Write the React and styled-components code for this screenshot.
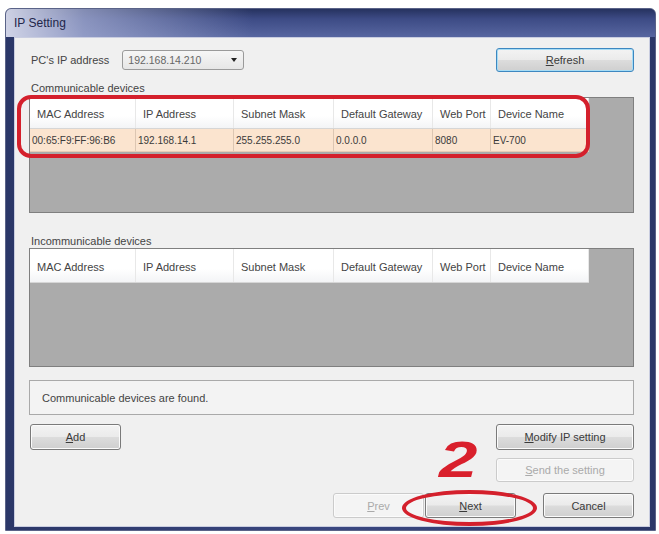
import React from "react";
import styled, { createGlobalStyle } from "styled-components";

const GlobalStyle = createGlobalStyle`
  body {
    margin: 0;
    background: #ffffff;
    font-family: "Liberation Sans", Arial, sans-serif;
  }
`;

const columns = [
  { label: "MAC Address", width: 106 },
  { label: "IP Address", width: 98 },
  { label: "Subnet Mask", width: 100 },
  { label: "Default Gateway", width: 99 },
  { label: "Web Port", width: 58 },
  { label: "Device Name", width: 98 },
];

const foundDevices = [
  ["00:65:F9:FF:96:B6", "192.168.14.1", "255.255.255.0", "0.0.0.0", "8080", "EV-700"],
];

const Window = styled.div`
  position: relative;
  box-sizing: border-box;
  width: 651px;
  height: 523px;
  margin: 8px 0 0 5px;
  padding: 0 5px 3px 8px;
  display: flex;
  flex-direction: column;
  border: 1px solid #5a6388;
  border-radius: 6px 6px 0 0;
  background: linear-gradient(to right, #2b3768 0%, #3a4780 50%, #2b3768 100%);
`;

const TitleBar = styled.div`
  height: 28px;
  margin: 0 -5px 0 -8px;
  padding-left: 8px;
  display: flex;
  align-items: center;
  border-radius: 5px 5px 0 0;
  background:
    linear-gradient(to right, rgba(214, 217, 234, 0.95) 0%, rgba(170, 178, 214, 0.7) 12%, rgba(110, 122, 175, 0) 38%),
    linear-gradient(#26325f 0%, #3d4b85 35%, #5766a0 100%);
`;

const Title = styled.span`
  font-size: 12px;
  color: #22264a;
`;

const Client = styled.div`
  flex: 1;
  box-sizing: border-box;
  padding: 0 15px 0 14px;
  display: flex;
  flex-direction: column;
  background: #f0f0f0;
  border: 1px solid #c9cde0;
  color: #444;
  font-size: 11px;
`;

const TopRow = styled.div`
  margin-top: 10px;
  height: 24px;
  display: flex;
  align-items: center;
`;

const Label = styled.span`
  margin-left: 2px;
  color: #444;
`;

const SectionLabel = styled.div`
  margin: ${(p) => p.$top}px 0 0 2px;
  height: 14px;
  line-height: 14px;
  color: #444;
`;

const Combo = styled.div`
  box-sizing: border-box;
  width: 122px;
  height: 20px;
  margin-left: 13px;
  padding: 0 6px 0 5px;
  display: flex;
  align-items: center;
  justify-content: space-between;
  border: 1px solid #9a9a9a;
  border-radius: 3px;
  background: linear-gradient(#f6f6f6, #e6e6e6);
  color: #666;
  font-size: 10.5px;
`;

const Arrow = styled.span`
  width: 0;
  height: 0;
  border-left: 3px solid transparent;
  border-right: 3px solid transparent;
  border-top: 4px solid #222;
`;

const Button = styled.button`
  box-sizing: border-box;
  width: ${(p) => p.$w || 91}px;
  height: ${(p) => p.$h || 25}px;
  padding: 0;
  font-family: inherit;
  font-size: 11px;
  color: ${(p) => (p.$disabled ? "#aaaaaa" : "#3a3a3a")};
  border: 1px solid ${(p) => (p.$disabled ? "#cbcbcb" : p.$default ? "#3d87c0" : "#7a7a7a")};
  border-radius: 3px;
  background: ${(p) =>
    p.$disabled
      ? "#f4f4f4"
      : "linear-gradient(#f3f3f3 0%, #ebebeb 48%, #dcdcdc 52%, #cfcfcf 100%)"};
  box-shadow: ${(p) => (p.$default ? "inset 0 0 0 1px #a6dcf5" : "inset 0 0 0 1px #fbfbfb")};
  margin-left: auto;

  u {
    text-decoration-thickness: 1px;
    text-underline-offset: 1px;
  }
`;

const TableFrame = styled.div`
  box-sizing: border-box;
  height: ${(p) => p.$h}px;
  margin-top: ${(p) => p.$top || 0}px;
  border: 1px solid #7f7f7f;
  background: #ababab;
  display: flex;
  flex-direction: column;
`;

const HeaderRow = styled.div`
  display: flex;
  width: 559px;
  height: ${(p) => p.$h}px;
  background: linear-gradient(#ffffff 0%, #ffffff 60%, #f3f4f6 100%);
  border-bottom: 1px solid #d6d6d6;
`;

const HeaderCell = styled.div`
  box-sizing: border-box;
  padding: 2px 0 0 7px;
  display: flex;
  align-items: center;
  border-right: 1px solid #e8e8e8;
  color: #444;
`;

const DataRow = styled.div`
  display: flex;
  width: 559px;
  height: 22px;
  background: #fbe4cf;
  border-bottom: 1px solid #e8cdb5;
`;

const DataCell = styled.div`
  box-sizing: border-box;
  padding-left: 2px;
  display: flex;
  align-items: center;
  border-right: 1px solid #dcc6b2;
  font-size: 10px;
  color: #3a3a3a;
`;

const StatusBox = styled.div`
  box-sizing: border-box;
  height: 35px;
  margin-top: 13px;
  padding-left: 12px;
  display: flex;
  align-items: center;
  border: 1px solid #a9a9a9;
  background: #f3f3f3;
  color: #444;
`;

const ActionArea = styled.div`
  margin-top: 9px;
  display: flex;
  justify-content: space-between;
  align-items: flex-start;
`;

const RightColumn = styled.div`
  display: flex;
  flex-direction: column;
  gap: 8px;
`;

const BottomRow = styled.div`
  margin-top: 11px;
  display: flex;
  justify-content: flex-end;
  gap: 1px;
`;

const Spacer = styled.div`
  width: 25px;
`;

const RoundMark = styled.div`
  position: absolute;
  box-sizing: border-box;
  left: ${(p) => p.$x}px;
  top: ${(p) => p.$y}px;
  width: ${(p) => p.$w}px;
  height: ${(p) => p.$h}px;
  border: 4px solid #d4202c;
  border-radius: ${(p) => p.$r};
  pointer-events: none;
`;

const StepNumber = styled.span`
  position: absolute;
  left: 433px;
  top: 426px;
  font-size: 50px;
  line-height: 50px;
  font-weight: bold;
  font-style: italic;
  color: #d9202c;
  transform: scaleX(1.38);
  transform-origin: left top;
`;

function DeviceTable({ height, headerHeight, rows, top }) {
  return (
    <TableFrame $h={height} $top={top}>
      <HeaderRow $h={headerHeight}>
        {columns.map((c) => (
          <HeaderCell key={c.label} style={{ width: c.width }}>
            {c.label}
          </HeaderCell>
        ))}
      </HeaderRow>
      {rows.map((r) => (
        <DataRow key={r[0]}>
          {r.map((v, i) => (
            <DataCell key={i} style={{ width: columns[i].width }}>
              {v}
            </DataCell>
          ))}
        </DataRow>
      ))}
    </TableFrame>
  );
}

export default function App() {
  return (
    <>
      <GlobalStyle />
      <Window>
        <TitleBar>
          <Title>IP Setting</Title>
        </TitleBar>
        <Client>
          <TopRow>
            <Label>PC's IP address</Label>
            <Combo>
              <span>192.168.14.210</span>
              <Arrow />
            </Combo>
            <Button $w={138} $h={24} $default>
              <u>R</u>efresh
            </Button>
          </TopRow>
          <SectionLabel $top={9}>Communicable devices</SectionLabel>
          <DeviceTable height={116} headerHeight={30} rows={foundDevices} top={2} />
          <SectionLabel $top={21}>Incommunicable devices</SectionLabel>
          <DeviceTable height={119} headerHeight={33} rows={[]} />
          <StatusBox>Communicable devices are found.</StatusBox>
          <ActionArea>
            <Button $w={91} $h={26} style={{ marginLeft: 1 }}>
              <u>A</u>dd
            </Button>
            <RightColumn>
              <Button $w={138} $h={26}>
                <u>M</u>odify IP setting
              </Button>
              <Button $w={138} $h={24} $disabled>
                <u>S</u>end the setting
              </Button>
            </RightColumn>
          </ActionArea>
          <BottomRow>
            <Button $disabled>
              <u>P</u>rev
            </Button>
            <Button style={{ marginLeft: 0 }}>
              <u>N</u>ext
            </Button>
            <Spacer />
            <Button style={{ marginLeft: 0 }}>Cancel</Button>
          </BottomRow>
        </Client>
        <RoundMark $x={11} $y={86} $w={573} $h={63} $r="14px" />
        <RoundMark $x={396} $y={481} $w={135} $h={36} $r="50%" />
        <StepNumber>2</StepNumber>
      </Window>
    </>
  );
}
